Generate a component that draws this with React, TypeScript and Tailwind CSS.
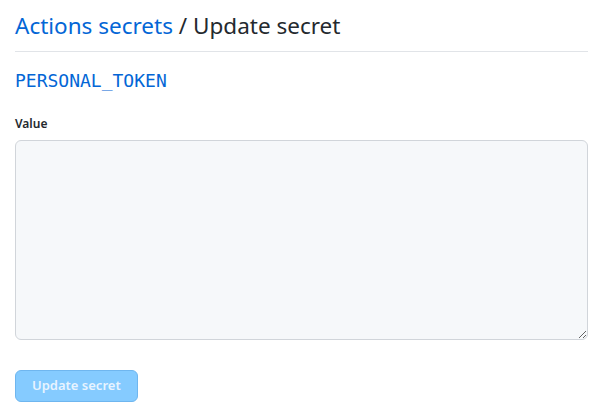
export default function App() {
  return (
    <div className="min-h-screen bg-white px-[15px] text-[#24292e]" style={{ fontFamily: "'Noto Sans', 'Open Sans', sans-serif" }}>
      <div className="w-[573px]">
        <div className="border-b border-[#e1e4e8] pt-[10px] pb-[9px]">
          <h2 className="text-[22.5px] font-normal leading-[32px]">
            <a href="#" className="text-[#0366d6]">Actions secrets</a> / Update secret
          </h2>
        </div>
        <div className="mt-[17px] text-[18px] leading-[24px] text-[#0366d6]" style={{ fontFamily: "'DejaVu Sans Mono', monospace" }}>
          PERSONAL_TOKEN
        </div>
        <form className="mt-[22px]">
          <label className="block text-[12px] font-semibold leading-[18px]">Value</label>
          <textarea
            className="mt-[7px] block h-[200px] w-full rounded-[6px] border border-[#d1d5da] bg-[#f6f8fa] px-2 py-2 text-sm outline-none"
          />
          <button
            type="button"
            disabled
            className="mt-[30px] h-[32px] rounded-[6px] border border-[#6fb6ef] bg-[#85cbff] px-[16px] text-[13px] font-semibold text-[#e8f4ff]"
          >
            Update secret
          </button>
        </form>
      </div>
    </div>
  );
}
